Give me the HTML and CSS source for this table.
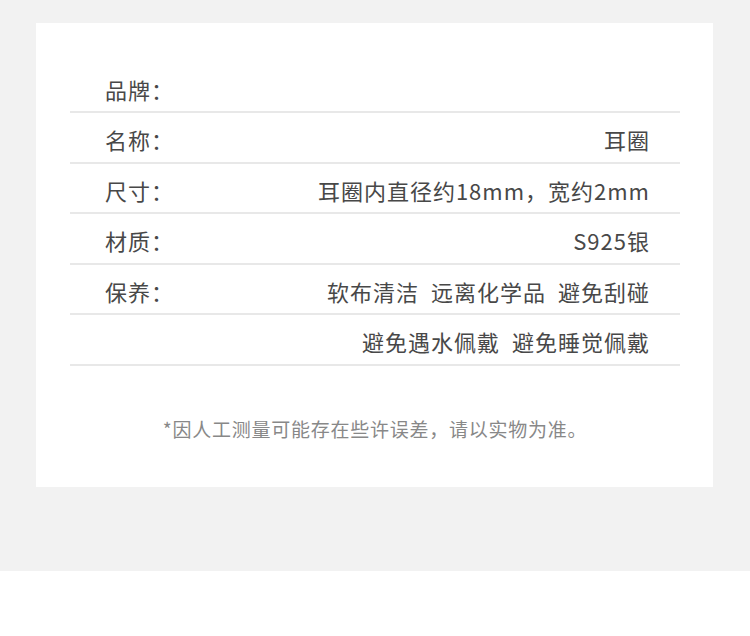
FILE: index.html
```html
<!DOCTYPE html>
<html lang="zh-CN">
<head>
    <meta charset="UTF-8">
    <meta name="viewport" content="width=device-width, initial-scale=1.0">
    <title>商品参数</title>
    <link rel="stylesheet" href="styles.css">
</head>
<body>
    <div class="page">
        <div class="spec-card">
            <div class="spec-list">
                <div class="spec-row">
                    <span class="spec-label">品牌：</span>
                    <span class="spec-value"></span>
                </div>
                <div class="spec-row">
                    <span class="spec-label">名称：</span>
                    <span class="spec-value">耳圈</span>
                </div>
                <div class="spec-row">
                    <span class="spec-label">尺寸：</span>
                    <span class="spec-value">耳圈内直径约18mm，宽约2mm</span>
                </div>
                <div class="spec-row">
                    <span class="spec-label">材质：</span>
                    <span class="spec-value">S925银</span>
                </div>
                <div class="spec-row">
                    <span class="spec-label">保养：</span>
                    <span class="spec-value">
                        <span class="tip">软布清洁</span>
                        <span class="tip">远离化学品</span>
                        <span class="tip">避免刮碰</span>
                    </span>
                </div>
                <div class="spec-row">
                    <span class="spec-label"></span>
                    <span class="spec-value">
                        <span class="tip">避免遇水佩戴</span>
                        <span class="tip">避免睡觉佩戴</span>
                    </span>
                </div>
            </div>
            <p class="note">*因人工测量可能存在些许误差，请以实物为准。</p>
        </div>
    </div>
</body>
</html>
```

FILE: styles.css
```css
body {
    margin: 0;
    background-color: #fff;
    font-family: "Noto Sans CJK SC", "Noto Sans", sans-serif;
}

.page {
    background-color: #f2f2f2;
    height: 571px;
    padding-top: 23px;
    box-sizing: border-box;
}

.spec-card {
    background-color: #fff;
    margin: 0 37px 0 36px;
    height: 464px;
    padding: 39.5px 33px 0 34px;
    box-sizing: border-box;
}

.spec-row {
    display: flex;
    justify-content: space-between;
    align-items: center;
    height: 50.5px;
    box-sizing: border-box;
    border-bottom: 2px solid #e8e8e8;
    padding: 4px 30px 0 35px;
    font-size: 22px;
    letter-spacing: 1px;
    color: #484848;
}

.spec-value {
    display: flex;
    gap: 12px;
}

.note {
    margin: 49px 0 0;
    text-align: center;
    font-size: 19px;
    letter-spacing: 0.75px;
    color: #888;
}
```
